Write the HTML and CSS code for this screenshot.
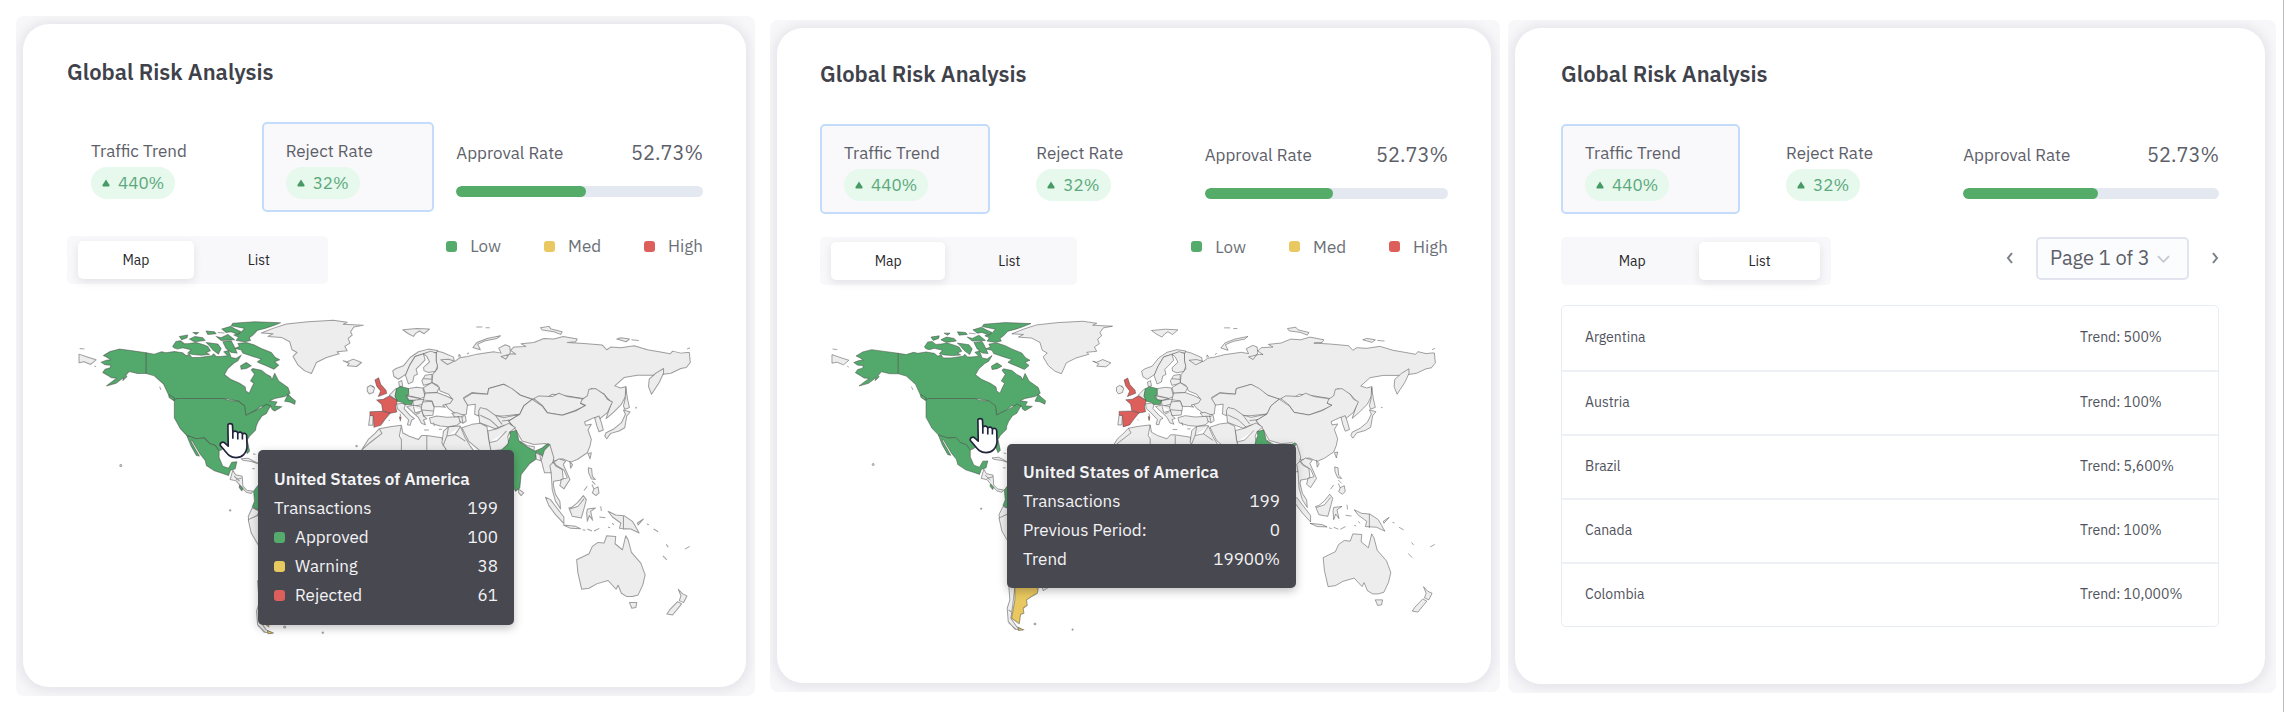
FILE: index.html
```html
<!DOCTYPE html>
<html lang="en">
<head>
<meta charset="utf-8">
<title>Global Risk Analysis</title>
<link rel="stylesheet" href="styles.css">
</head>
<body>
<svg class="defs" width="0" height="0" aria-hidden="true">
  <symbol id="world" viewBox="45 45 1860 975">
    <g class="land">
      <!-- Greenland, Iceland, Central America -->
      <path d="M605 102L640 88L680 75L745 68L820 64L862 70L850 76L910 79L882 84L872 98L877 108L865 118L870 132L855 142L862 155L832 158L838 164L800 175L770 190L762 208L755 223L735 215L715 198L700 172L712 160L697 152L690 128L665 115L625 112L640 104Z"/>
      <path d="M850 185L862 188L880 180L905 190L890 202L862 200L868 193Z"/>
      <path d="M512 540L520 512L528 526L548 530L550 560L562 572L580 575L575 582L560 578L545 562L530 544ZM524 530L540 545M530 540L548 535"/>
      <path d="M545 478L565 476L592 490L600 494L575 486L550 482ZM578 508h8M580 463l8 2"/>
      <path d="M578 625L600 634L592 648L568 664L566 650Z"/>
      <path d="M566 660L592 648L620 660L690 780L660 860L620 800L596 736L575 700Z"/>
      <path d="M640 570L760 600L850 690L800 820L700 880L670 780L620 660Z"/>
      <circle cx="512" cy="632" r="2"/><circle cx="185" cy="498" r="3"/><circle cx="789" cy="998" r="2"/><circle cx="675" cy="981" r="3"/><circle cx="890" cy="440" r="2"/>
      <!-- Africa -->
      <path d="M905 452L925 420L945 402L958 388L990 382L1024 378L1028 400L1046 410L1075 420L1085 408L1100 408L1145 415L1160 455L1200 520L1240 560L1200 640L1180 760L1110 840L1080 840L1060 700L1030 610L940 590L890 530ZM958 388L966 402L930 430L905 452M1024 378L1018 410L1024 420V455M1100 410V455"/>
      <path d="M60 165L80 172L111 182L95 196L75 188L60 191ZM62 148l14 2M106 200l5 3"/>
    </g>
    <g class="land land--low" transform="translate(45 30)">
      <path d="M216 131L180 126L135 120L108 127L88 139L100 145L110 152L97 153L81 159L93 167L110 168L108 176L93 180L86 190L100 198L112 206L128 207L118 214L97 230L126 222L148 205L146 214L158 202L155 198L165 187L190 193L216 193Z"/>
      <path d="M216 131L240 135L262 128L275 131L300 127L325 131L336 140L345 135L352 145L375 145L412 140L418 134L425 142L438 142L460 140L448 128L462 124L470 145L485 148L500 138L490 155L478 162L460 178L450 196L468 210L495 222L512 233L514 245L524 252L530 238L538 222L528 215L540 195L530 182L535 178L560 183L575 195L588 202L592 212L600 192L612 215L640 235L646 252L630 262L600 268L585 275L607 278L600 290L622 292L600 305L592 300L590 292L575 293L560 290L540 305L514 318L510 290L490 275L450 268L310 268L300 274L285 262L275 240L268 225L240 200L216 193Z"/>
      <path d="M300 270L310 268L450 268L462 274L490 275L510 290L514 318L540 305L560 295L575 285L588 290L582 300L575 313L562 320L550 338L545 350L543 362L525 380L518 392L525 425L518 432L508 408L480 405L458 410L440 422L432 424L422 408L405 402L390 386L365 388L337 378L318 358L300 325Z"/>
      <path d="M337 378L365 388L390 386L405 402L422 408L434 424L434 445L445 470L462 476L472 458L487 457L482 478L468 482L462 498L445 492L420 484L396 468L392 452L378 435L352 392L350 396L375 440L366 438L350 410Z"/>
      <path d="M640 255L650 265L662 275L660 285L645 278L630 276Z"/>
      <path d="M475 43L540 38L618 41L595 50L572 58L548 64L535 78L524 86L528 94L510 98L485 94L492 84L478 78L500 70L510 58L470 50Z"/>
      <path d="M442 60L468 52L482 60L500 68L490 76L470 68L455 70Z"/>
      <path d="M295 112L305 97L318 95L330 104L345 103L365 100L390 108L400 112L408 125L395 130L405 136L380 138L355 136L340 132L350 122L325 116L310 120L300 117Z"/>
      <path d="M490 103L515 100L540 108L560 118L590 130L602 145L615 152L600 158L612 168L598 180L575 170L555 162L548 158L560 150L535 142L505 132L500 122L480 118L495 112Z"/>
      <path d="M395 100L430 105L440 118L432 135L415 122L405 110ZM445 98L470 95L478 110L488 132L470 130L455 118ZM315 82L340 78L338 86L322 92ZM345 90L362 82L385 86L392 94L360 98ZM395 66L420 68L425 74L400 76ZM425 82L440 86L460 76L480 92L440 94ZM355 70L373 70L365 76ZM430 70l20 2M515 160L530 170L515 178L500 180L498 170Z"/>
      <path d="M285 256L300 266L298 274L284 264ZM256 232l4 10"/>
      <path d="M495 527L505 537L502 544L494 534Z"/>
      <path d="M550 528L537 545L540 575L533 592L555 604L640 610L640 540Z"/>
    </g>
    <g transform="translate(265 304) scale(1.012 1.007)">
      <path class="land" d="M325 535L345 535L345 562L338 620L333 655L350 680L368 690L345 688L325 665L322 625L330 600ZM326 630l8 6M326 668L350 690"/>
      <path class="land land--med" d="M345 500L400 520L395 555L415 566L412 580L398 588L380 600L382 616L370 625L372 640L362 644L358 672L335 655L345 600ZM354 683L372 690L356 692Z"/>
    </g>
    <!-- Eurasian mainland -->
    <g class="land" transform="translate(960 0)">
      <path d="M168 155L188 160L220 174L222 186L202 196L182 182L205 180L225 186L238 176L262 172L290 165L340 158L362 162L355 147L375 137L388 142L390 160L376 180L362 172L395 164L406 165L390 154L400 144L436 142L422 134L460 130L490 118L520 120L548 112L590 120L585 128L560 130L610 133L665 138L678 152L690 144L720 146L760 140L800 152L835 158L868 164L875 156L900 162L918 160L925 160L928 190L916 205L900 208L870 222L848 225L820 228L770 228L730 235L702 260L720 266L736 262L735 290L722 315L695 342L676 358L692 310L670 285L632 268L620 300L560 290L515 285L500 295L455 300L420 288L370 255L325 268L322 285L275 280L250 295L262 315L258 345L235 350L205 328L195 315L215 298L205 285L180 275L172 258L155 250L158 225L172 208L168 185Z"/>
      <path d="M848 208L848 222L835 250L812 285L803 262L805 240L825 222Z"/>
      <path d="M735 265L740 298L746 325L732 330L728 320L733 300Z"/>
      <path d="M278 145L290 130L320 118L360 110L350 118L315 125L292 135L300 152ZM236 174v-8l6 6M260 165l6 -4"/>
      <path d="M480 86L505 82L512 90L545 98L540 106L520 98L485 93ZM708 120l12 -4 26 4 -10 8zM752 122l22 2M288 84h18M316 86h12M918 150l9 -4"/>
      <path d="M68 92L110 88L148 90L132 104L118 96L108 102L100 112L85 104Z"/>
      <path d="M250 298L275 282L322 285L325 268L370 255L395 268L420 288L455 300L430 320L418 345L370 350L345 350L320 335L300 332L295 350L283 345L285 315L262 318Z"/>
      <path d="M295 335L300 325L320 330L345 348L370 355L418 345L385 365L400 385L370 378L345 388L298 370ZM300 348L330 362L355 385M345 348L365 375M365 365L390 362"/>
      <path d="M460 298L475 290L515 292L535 282L560 292L600 298L620 306L600 312L615 320L580 335L545 348L500 340L485 318Z"/>
      <path d="M455 300L485 320L500 340L545 348L585 335L615 318L600 312L605 300L620 290L625 270L645 268L670 285L680 300L695 308L680 340L655 360L640 355L625 362L612 368L615 378L632 375L622 392L632 420L628 440L620 460L590 480L570 488L545 478L520 485L508 450L495 432L460 435L425 425L405 390L385 365L418 345L430 320Z"/>
      <path d="M642 355L655 350L662 370L668 392L655 397L648 378Z"/>
      <path d="M734 345L728 332L748 338L738 350L732 385L715 395L690 402L678 418L672 410L676 400L700 388L722 370ZM622 462L632 460L628 478Z"/><circle cx="766" cy="325" r="1"/>
      <path d="M322 395L350 388L385 372L405 385L388 398L382 412L385 432L370 450L330 455ZM326 430L350 424L378 395"/>
      <path d="M245 385L275 375L300 372L320 382L325 420L332 455L300 455L265 425L255 405Z"/>
      <path d="M215 342L230 340L255 350L258 365L248 372L232 362ZM230 352L250 352M244 350L248 370"/>
      <path d="M190 395L205 382L240 380L255 415L270 440L300 480L250 540L210 470L185 430ZM205 382L200 410L188 440M200 410L225 405L240 382M225 405L255 425"/>
      <path d="M418 425L440 438L462 442L460 455L425 438Z"/><path d="M414 568L430 580L422 588L415 580Z"/>
    </g>
    <path class="land land--low" transform="translate(960 0)" d="M388 398L408 393L416 425L440 442L463 455L484 446L502 432L508 436L498 448L490 475L480 465L468 458L465 480L448 492L422 525L418 565L405 575L385 530L370 490L365 450L382 435L386 420L390 410Z"/>
    <path class="land" transform="translate(960 0)" d="M465 460L478 466L482 484L468 480Z"/>
    <!-- Europe -->
    <g class="land" transform="translate(900 60)">
      <path d="M22 204L32 198L44 206L40 220L28 224L22 216Z"/>
      <path d="M30 288L40 288L38 318L26 318Z"/>
      <path d="M88 228L105 210L110 208L106 232L112 244Z"/>
      <path d="M116 188L125 184L128 200L118 202Z"/>
      <path d="M110 254L128 252L136 256L132 268L150 288L163 298L155 302L150 318L142 316L146 302L125 280L112 268Z"/>
      <path d="M98 155L108 148L130 140L150 115L175 98L205 90L232 94L230 100L205 100L188 105L165 112L148 140L138 165L115 180L102 172Z"/>
      <path d="M148 140L165 112L190 104L195 122L180 138L168 150L172 165L162 170L158 188L145 194L136 168Z"/>
      <path d="M190 104L212 96L228 102L228 125L232 140L226 156L205 160L192 155L190 145L208 128L200 112Z"/>
      <path d="M146 208L170 204L188 206L195 232L180 238L140 228Z"/>
      <path d="M195 168L215 165L215 192L190 198L185 185ZM190 178L215 180"/>
      <path d="M215 190L238 205L230 220L195 222L190 205Z"/>
      <path d="M195 222L230 220L258 230L278 240L270 252L248 258L256 264L240 262L222 262L215 245L190 242Z"/>
      <path d="M140 230L180 238L160 245L146 242ZM158 243L190 240L188 255L160 262Z"/>
      <path d="M188 248L215 246L222 265L218 288L190 290L182 268ZM186 272L220 275"/>
      <path d="M140 262L160 258L182 262L190 290L200 298L190 302L196 316L184 312L175 295ZM160 262L165 280L185 275M168 285L180 280"/>
      <path d="M208 296L230 290L260 294L295 292L300 310L290 318L265 322L240 320L212 312ZM192 332h14M236 330h10M220 310l3 10"/>
    </g>
    <g class="land land--high" transform="translate(900 60)">
      <path d="M45 182L56 176L62 195L78 213L80 222L55 232L62 215L50 200ZM36 200l6 4"/>
      <path d="M50 242L70 240L88 230L112 244L107 262L110 278L90 282L68 274L65 255Z"/>
      <path d="M30 277L68 276L90 282L75 300L62 318L42 324L40 290L30 288ZM120 283l2 8M118 293l5 0 -2 12zM86 302l3 2"/>
    </g>
    <g class="land land--low" transform="translate(900 60)">
      <path d="M110 208L122 202L145 208L146 226L138 230L145 242L158 243L155 256L135 256L128 250L112 246L105 230Z"/>
    </g>
    <!-- South-east Asia and Oceania -->
    <g class="land" transform="translate(1380 390)">
      <path d="M72 62L88 46L100 85L95 108L92 130L72 130L62 92Z"/>
      <path d="M88 108L98 98L106 110L125 120L128 148L118 152L100 155L98 165L105 195L118 215L120 238L105 215L95 180L92 130Z"/>
      <path d="M100 98L115 88L135 95L128 105L148 150L130 178L118 168L122 150L140 145L130 122L108 108ZM148 96l8 10 -6 10z"/>
      <path d="M75 203L90 210L105 230L130 262L130 282L105 255L85 228ZM128 286L165 290L180 297L150 296ZM186 300l8 2M200 298l14 6M220 304l16 -8"/>
      <path d="M145 235L155 232L170 220L188 198L197 210L192 230L182 265L155 260ZM148 238L172 230L190 208"/>
      <path d="M200 238L225 235L210 245L216 272L206 258L200 275L198 250ZM240 230l2 14M236 262l18 2M262 292l6 2M275 280l4 6"/>
      <path d="M203 115L213 118L215 140L224 150L212 148L204 130ZM214 155l10 10M220 178L232 172L235 190L226 198L215 190ZM190 183L200 170M214 165l6 14"/>
      <path d="M262 245L285 256L310 258L335 275L345 292L355 310L330 298L296 296L300 280L275 262ZM308 258V300M350 280L368 268L352 286ZM378 283l6 2M398 298l14 8M436 344l6 8M492 358l14 -8"/>
      <path d="M168 390L205 372L215 350L232 338L250 340L258 318L285 320L283 342L305 360L315 318L322 330L332 368L360 400L373 435L366 465L352 495L335 500L318 500L302 490L292 466L286 478L262 452L228 462L205 475L183 478L172 430Z"/>
      <path d="M326 518L348 518L345 533L333 535Z"/>
      <path d="M472 478L485 492L498 498L488 518L475 512L480 498ZM470 515L482 522L455 555L438 552L446 540Z"/>
      <path class="land--high" d="M426 378l12 12"/>
    </g>
  </symbol>
  <symbol id="hand" viewBox="436 337 88 112">
    <path class="hand" d="M463 347C463 340 476 340 477 347L478 368C482 362 492 364 493 371C497 365 506 367 507 374C512 369 520 372 520 379L521 410C521 432 505 445 488 445C468 445 460 432 452 422L440 408C438 398 450 395 455 402L464 410ZM478 368V388M493 371V390M507 374V390"/>
  </symbol>
  <symbol id="up" viewBox="0 0 8 8"><path d="M4 0.500L7.500 6Q8 7.500 6.500 7.500H1.500Q0 7.500 0.500 6Z"/></symbol>
</svg>

<main class="board">
  <section class="frame frame--large">
    <div class="card">
      <h2 class="title">Global Risk Analysis</h2>
      <div class="stats">
        <button class="stat" type="button"><span>Traffic Trend</span><span class="pill"><svg class="up"><use href="#up"/></svg>440%</span></button>
        <button class="stat stat--active" type="button"><span>Reject Rate</span><span class="pill"><svg class="up"><use href="#up"/></svg>32%</span></button>
        <div class="approval">
          <div class="approval-head"><span>Approval Rate</span><strong>52.73%</strong></div>
          <div class="track"><div class="fill" style="width:52.73%"></div></div>
        </div>
      </div>
      <div class="tools">
        <div class="tabs"><button class="tab tab--on" type="button">Map</button><button class="tab" type="button">List</button></div>
        <ul class="legend"><li><i class="dot dot--low"></i>Low</li><li><i class="dot dot--med"></i>Med</li><li><i class="dot dot--high"></i>High</li></ul>
      </div>
      <div class="map">
        <svg class="world" viewBox="0 0 1860 975"><use href="#world"/></svg>
        <svg class="cursor cursor--a"><use href="#hand"/></svg>
        <div class="tip tip--a">
          <b>United States of America</b>
          <p><span>Transactions</span><span>199</span></p>
          <p><span><i class="dot dot--low"></i>Approved</span><span>100</span></p>
          <p><span><i class="dot dot--med"></i>Warning</span><span>38</span></p>
          <p><span><i class="dot dot--high"></i>Rejected</span><span>61</span></p>
        </div>
      </div>
    </div>
  </section>

  <section class="frame">
    <div class="card">
      <h2 class="title">Global Risk Analysis</h2>
      <div class="stats">
        <button class="stat stat--active" type="button"><span>Traffic Trend</span><span class="pill"><svg class="up"><use href="#up"/></svg>440%</span></button>
        <button class="stat" type="button"><span>Reject Rate</span><span class="pill"><svg class="up"><use href="#up"/></svg>32%</span></button>
        <div class="approval">
          <div class="approval-head"><span>Approval Rate</span><strong>52.73%</strong></div>
          <div class="track"><div class="fill" style="width:52.73%"></div></div>
        </div>
      </div>
      <div class="tools">
        <div class="tabs"><button class="tab tab--on" type="button">Map</button><button class="tab" type="button">List</button></div>
        <ul class="legend"><li><i class="dot dot--low"></i>Low</li><li><i class="dot dot--med"></i>Med</li><li><i class="dot dot--high"></i>High</li></ul>
      </div>
      <div class="map">
        <svg class="world" viewBox="0 0 1860 975"><use href="#world"/></svg>
        <svg class="cursor cursor--b"><use href="#hand"/></svg>
        <div class="tip tip--b">
          <b>United States of America</b>
          <p><span>Transactions</span><span>199</span></p>
          <p><span>Previous Period:</span><span>0</span></p>
          <p><span>Trend</span><span>19900%</span></p>
        </div>
      </div>
    </div>
  </section>

  <section class="frame frame--list">
    <div class="card">
      <h2 class="title">Global Risk Analysis</h2>
      <div class="stats">
        <button class="stat stat--active" type="button"><span>Traffic Trend</span><span class="pill"><svg class="up"><use href="#up"/></svg>440%</span></button>
        <button class="stat" type="button"><span>Reject Rate</span><span class="pill"><svg class="up"><use href="#up"/></svg>32%</span></button>
        <div class="approval">
          <div class="approval-head"><span>Approval Rate</span><strong>52.73%</strong></div>
          <div class="track"><div class="fill" style="width:52.73%"></div></div>
        </div>
      </div>
      <div class="tools">
        <div class="tabs"><button class="tab" type="button">Map</button><button class="tab tab--on" type="button">List</button></div>
        <div class="pager">
          <button class="step" type="button" aria-label="Previous page"><svg viewBox="0 0 8 12"><path d="M6 1L2 6L6 11"/></svg></button>
          <div class="picker">
            <select class="select" aria-label="Page"><option>Page 1 of 3</option><option>Page 2 of 3</option><option>Page 3 of 3</option></select>
            <svg class="caret" viewBox="0 0 14 8"><path d="M1 1L7 7L13 1"/></svg>
          </div>
          <button class="step" type="button" aria-label="Next page"><svg viewBox="0 0 8 12"><path d="M2 1L6 6L2 11"/></svg></button>
        </div>
      </div>
      <table class="list">
        <tbody>
          <tr><td>Argentina</td><td>Trend: 500%</td></tr>
          <tr><td>Austria</td><td>Trend: 100%</td></tr>
          <tr><td>Brazil</td><td>Trend: 5,600%</td></tr>
          <tr><td>Canada</td><td>Trend: 100%</td></tr>
          <tr><td>Colombia</td><td>Trend: 10,000%</td></tr>
        </tbody>
      </table>
    </div>
  </section>
</main>
</body>
</html>
```

FILE: styles.css
```css
* { box-sizing: border-box; }

body {
  margin: 0;
  background: #fff;
  color: #5d6069;
  font: 17px/24px "IBM Plex Sans", Roboto, "Noto Sans", sans-serif;
}

button, select { font: inherit; color: inherit; }
.defs { position: absolute; }

.board {
  display: grid;
  grid-template-columns: 746fr 730fr 768fr;
  column-gap: 8px;
  align-items: center;
  min-height: 100vh;
  margin-right: 4px;
  padding: 0 7px 0 16px;
  border-right: 1px solid #b9bcc0;
}

.frame {
  overflow: hidden;
  padding: 8px 9px 9px 7px;
  border-radius: 8px;
  background: #f7f7f9;
}

.frame--large { margin-right: 7px; }
.frame--list { padding-right: 11px; }

.card {
  padding: 33px 43px 47px;
  border-radius: 26px;
  background: #fff;
  box-shadow: 0 1px 10px 4px #e6e6ec;
}

.frame--large .card { padding: 35px 43px 46px 44px; }
.frame--list .card { padding: 33px 46px 57px; }

.title {
  margin: 0 0 37px;
  color: #3f424b;
  font-size: 22px;
  font-weight: 600;
  line-height: 26px;
}

.stats {
  display: grid;
  grid-template-columns: 7fr 7fr 10fr;
  gap: 22px;
  margin-bottom: 23px;
}

.frame--large .stats { margin-bottom: 24px; }

.stat {
  display: flex;
  flex-direction: column;
  align-items: flex-start;
  gap: 4px;
  padding: 15px 22px 11px;
  border: 2px solid transparent;
  border-radius: 5px;
  background: none;
  text-align: left;
}

.stat--active { border-color: #c4dcfb; background: #f9f9fb; }

.pill {
  display: flex;
  align-items: center;
  gap: 8px;
  padding: 4px 11px;
  border-radius: 17px;
  background: #e7f8ec;
  color: #5aa87c;
}

.up { width: 8px; height: 8px; fill: #459a66; }

.approval { padding-top: 19px; }

.approval-head {
  display: flex;
  align-items: center;
  justify-content: space-between;
  margin-bottom: 21px;
}

.approval-head strong { font-size: 20px; font-weight: 400; }
.track { height: 11px; border-radius: 6px; background: #e4e8f0; overflow: hidden; }
.fill { height: 100%; border-radius: 6px; background: #55ab68; }

.tools {
  display: flex;
  align-items: flex-start;
  justify-content: space-between;
}

.tabs {
  display: flex;
  gap: 7px;
  width: 41%;
  padding: 5px 11px;
  border-radius: 5px;
  background: #f8f8fa;
}

.tab {
  flex: 1;
  height: 38px;
  padding: 0;
  border: 0;
  border-radius: 5px;
  background: none;
  color: #26272b;
  font-size: 14px;
}

.tab--on { background: #fff; box-shadow: 0 3px 9px rgba(40, 40, 70, 0.1); }

.legend {
  display: flex;
  gap: 43px;
  margin: 0;
  padding: 0;
  list-style: none;
  line-height: 20px;
  color: #6c7078;
}

.legend li { display: flex; align-items: center; }

.dot {
  display: inline-block;
  flex: none;
  width: 11px;
  height: 11px;
  margin-right: 13px;
  border-radius: 3px;
}

.dot--low { background: #55ab6b; }
.dot--med { background: #e9c85f; }
.dot--high { background: #dc5f5b; }

.map { position: relative; padding: 30px 7px 0; }
.world { display: block; width: 100%; height: auto; }

.land {
  fill: #ededed;
  stroke: rgba(70, 70, 70, 0.5);
  stroke-width: 3;
  stroke-linejoin: round;
}

.land--low { fill: #53a96b; }
.land--med { fill: #e9c85f; }
.land--high { fill: #dc5f5b; }

.hand { fill: #fff; stroke: #22243c; stroke-width: 5; stroke-linejoin: round; }
.cursor { position: absolute; width: 29px; height: 37px; }
.cursor--a { left: 152px; top: 138px; }
.cursor--b { left: 149px; top: 132px; }

.tip {
  position: absolute;
  padding: 15px 16px;
  border-radius: 5px;
  background: #484850;
  color: #f3f3f5;
  line-height: 29px;
  box-shadow: 0 3px 10px rgba(0, 0, 0, 0.25);
}

.tip--a { left: 191px; top: 166px; width: 256px; }
.tip--b { left: 187px; top: 159px; width: 289px; padding: 14px 16px; }
.tip b { font-weight: 600; }
.tip p { display: flex; justify-content: space-between; margin: 0; }
.tip .dot { margin-right: 10px; }

.pager { display: flex; align-items: center; gap: 22px; }

.step {
  display: flex;
  width: 8px;
  padding: 0;
  border: 0;
  background: none;
}

.step svg, .caret { fill: none; stroke: #7b7f89; stroke-width: 2; overflow: visible; }
.step svg { width: 8px; height: 12px; }

.picker { position: relative; }

.select {
  display: block;
  width: 153px;
  height: 43px;
  padding: 0 32px 0 12px;
  border: 2px solid #e1e4ee;
  border-radius: 5px;
  background: #fbfcfe;
  appearance: none;
  font-size: 20px;
}

.caret {
  position: absolute;
  right: 19px;
  top: 18px;
  width: 13px;
  height: 8px;
  stroke: #c5c8cf;
  pointer-events: none;
}

.list {
  width: 100%;
  margin-top: 20px;
  border: 1px solid #e8edf3;
  border-radius: 5px;
  border-spacing: 0;
  font-size: 14px;
  color: #50535d;
}

.list td {
  height: 64px;
  padding: 0 0 2px 23px;
}

.list td + td { width: 161px; }
.list tr + tr td { border-top: 2px solid #edf1f5; }
```
